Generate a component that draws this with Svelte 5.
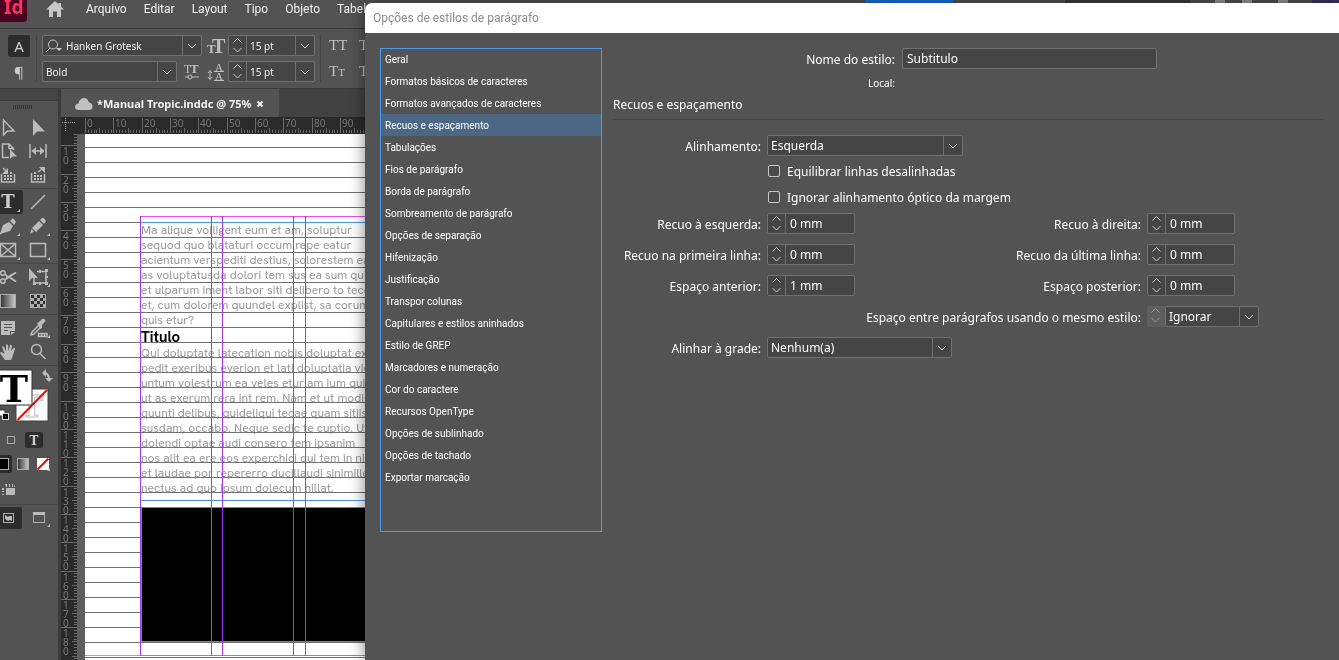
<script lang="ts">
	type Tool = {
		label: string;
		fill?: string;
		line?: string;
		glyph?: string;
		flyout?: boolean;
		active?: boolean;
	};

	const menus = ['Arquivo', 'Editar', 'Layout', 'Tipo', 'Objeto', 'Tabela'];

	const sections = [
		'Geral',
		'Formatos básicos de caracteres',
		'Formatos avançados de caracteres',
		'Recuos e espaçamento',
		'Tabulações',
		'Fios de parágrafo',
		'Borda de parágrafo',
		'Sombreamento de parágrafo',
		'Opções de separação',
		'Hifenização',
		'Justificação',
		'Transpor colunas',
		'Capitulares e estilos aninhados',
		'Estilo de GREP',
		'Marcadores e numeração',
		'Cor do caractere',
		'Recursos OpenType',
		'Opções de sublinhado',
		'Opções de tachado',
		'Exportar marcação'
	];

	// icon paths are drawn around a 0,0 centre
	const toolGroups: Tool[][] = [
		[
			{ label: 'Seleção', line: 'M-4.500 -7V8L-.5 4H6Z' },
			{ label: 'Seleção direta', fill: 'M-5 -8V9L-1 4.500H7Z' },
			{
				label: 'Página',
				line: 'M1 6.500H-5.500V-7H1L5.500 -2.500V-1M1 -7V-2.500H5.500',
				fill: 'M2 -2V8L4.500 5.500H9Z'
			},
			{
				label: 'Espaço',
				line: 'M-8 -7V7M8 -7V7M-6 0H6',
				fill: 'M-6.500 0L-2 -4V4ZM6.500 0L2 -4V4Z'
			},
			{
				label: 'Coletor de conteúdo',
				line: 'M-6.500 -1V7H6.500V-1M-5 -7L-1 -3',
				fill: 'M0 -7V-1H-6ZM-4 0h2v2h-2zM-1 0h2v2h-2zM2 0h2v2h-2zM-4 3h2v2h-2zM-1 3h2v2h-2zM2 3h2v2h-2zM2 -3h2v2h-2z'
			},
			{
				label: 'Inseridor de conteúdo',
				line: 'M-6.500 -2V7H6.500V-1M0 -3L4 -6',
				fill: 'M1 -8H7V-2ZM-4 0h2v2h-2zM-1 0h2v2h-2zM2 0h2v2h-2zM-4 3h2v2h-2zM-1 3h2v2h-2zM2 3h2v2h-2zM-4 -3h2v2h-2z'
			}
		],
		[
			{ label: 'Texto', glyph: 'T', flyout: true, active: true },
			{ label: 'Linha', line: 'M-7 7L7 -7' },
			{
				label: 'Caneta',
				fill: 'M-8 8L-5 -1L1 -4L5 0L2 5ZM2 -5L5 -8L8 -4L6 -1Z',
				line: 'M-8 8L-2 2',
				flyout: true
			},
			{
				label: 'Lápis',
				fill: 'M-8 8L-6.500 3L-4 5.500ZM-6 2L1 -5L5 -1L-2 6ZM2 -6L4 -8Q5 -8.500 6 -7.500L7.500 -6Q8 -5 7.500 -4L6 -2Z',
				flyout: true
			},
			{
				label: 'Quadro de retângulo',
				line: 'M-7.500 -6.500H7.500V6.500H-7.500ZM-7.500 -6.500L7.500 6.500M7.500 -6.500L-7.500 6.500',
				flyout: true
			},
			{ label: 'Retângulo', line: 'M-7.500 -6.500H7.500V6.500H-7.500Z', flyout: true }
		],
		[
			{
				label: 'Tesoura',
				line: 'M-2.800 -4A2.300 2.300 0 1 1 -7.400 -4A2.300 2.300 0 1 1 -2.800 -4M-2.800 4A2.300 2.300 0 1 1 -7.400 4A2.300 2.300 0 1 1 -2.800 4M-3 -3L0 0L-3 3',
				fill: 'M-2 -2L0 -1L7 -5Q9 -5 8 -3.500L1 1L-2 3ZM1 1L7 5Q9 5 8 3.500L3 0Z'
			},
			{
				label: 'Transformação livre',
				line: 'M-1 -5.500H8M-4 1V6H8V-6',
				fill: 'M-9 -9V4L-6 1H0ZM7 -8h3v3h-3zM7 5h3v3h-3zM-5 5h3v3h-3zM1 5h2v3h-2zM7 -1h3v2h-3zM1 -7h2v3h-2z',
				flyout: true
			},
			{ label: 'Amostra de gradiente' },
			{ label: 'Difusão de gradiente' }
		],
		[
			{
				label: 'Nota',
				fill: 'M-7 -7H7V3H2V7H-7ZM3 7V4H7ZM-4 -4V-3H4V-4ZM-4 -1V0H4V-1ZM-4 2V3H0V2Z'
			},
			{
				label: 'Conta-gotas',
				line: 'M1 -3L-5 3Q-7 5 -7 7Q-5 7 -3 5L3 -1M0 5.500H9M0 8.500H9M.5 5V9M3.500 5V9M6.500 5V9M9 5V9',
				fill: 'M-1 -5L1 -6L4 -9Q7 -10 7.500 -7L4 -3L4 0L2 1Z',
				flyout: true
			},
			{
				label: 'Mão',
				fill: 'M-3 8L-8 1Q-7 -1 -5 1L-3.500 2L-6 -5Q-5 -6.500 -4 -5L-2 -1L-2 -7Q-1 -8.500 0 -7L.5 -1L2 -7Q3.500 -8 4 -6L3 -1L5.500 -4Q7 -5 7 -3L4 6L3 8Z'
			},
			{ label: 'Zoom', line: 'M3.500 -2.500A5 5 0 1 1 -6.500 -2.500A5 5 0 1 1 3.500 -2.500M2 1.500L7.500 7' }
		]
	];

	const firstStory = [
		'Ma alique volligent eum et am, soluptur',
		'sequod quo blataturi occum repe eatur',
		'acientum verspediti destius, solorestem ea',
		'as voluptatusda dolori tem sus ea sum quis',
		'et ulparum iment labor siti delibero to tece',
		'et, cum dolorem quundel explist, sa corum',
		'quis etur?'
	];
	const secondStory = [
		'Qui doluptate latecation nobis doluptat ex',
		'pedit exeribus everion et lati doluptatia vid',
		'untum volestrum ea veles etur am ium quis',
		'ut as exerum rera int rem. Nam et ut modis',
		'quunti delibus, quideliqui tecae quam sitiis',
		'susdam, occabo. Neque sedic te cuptio. Ut',
		'dolendi optae audi consero tem ipsanim',
		'nos alit ea ere eos experchici qui tem in nis',
		'et laudae por repererro ducillaudi sinimille',
		'nectus ad quo ipsum dolecum hillat.'
	];

	// ten millimetres of the page at 75 %
	const STEP = 28.35;
	const majors = Array.from({ length: 19 }, (_, i) => i);
	const minors = Array.from({ length: 200 }, (_, i) => i);
	const tick = (i: number) => Math.round((i * STEP) / 10);

	let selected = $state('Recuos e espaçamento');
	let styleName = $state('Subtitulo');
	let balance = $state(false);
	let ignoreMargin = $state(false);
</script>

{#snippet chevron()}
	<svg class="chevron" viewBox="0 0 18 19" aria-hidden="true"><path d="M5 8l4 4 4-4" /></svg>
{/snippet}

{#snippet arrows(name: string, disabled = false)}
	<span class="arrows" class:disabled>
		<button aria-label="Aumentar {name}" {disabled}>
			<svg viewBox="0 0 17 9"><path d="M4.500 6.500l4-4 4 4" /></svg>
		</button>
		<button aria-label="Diminuir {name}" {disabled}>
			<svg viewBox="0 0 17 9"><path d="M4.500 3l4 4 4-4" /></svg>
		</button>
	</span>
{/snippet}

{#snippet spinField(id: string, label: string, value: string)}
	<label for={id}>{label}</label>
	<span class="box spin">
		{@render arrows(label)}
		<input {id} {value} />
	</span>
{/snippet}

{#snippet pointField(label: string)}
	<span class="box points">
		{@render arrows(label)}
		<span class="combo">
			<select aria-label={label}><option>15 pt</option></select>
			{@render chevron()}
		</span>
	</span>
{/snippet}

<div class="app">
	<header class="menubar">
		<svg class="logo" viewBox="0 0 27 22" aria-label="InDesign">
			<rect y="-8" x="-4" width="31" height="30" rx="4" />
			<text x="4" y="14">Id</text>
		</svg>
		<button class="home" aria-label="Início">
			<svg viewBox="0 0 18 16"><path d="M9 0L0 8.500H3V16H7V10.500H11V16H15V8.500H18L15 5.500V2H12.500V3.300Z" /></svg>
		</button>
		<nav>
			{#each menus as menu}
				<button>{menu}</button>
			{/each}
		</nav>
		<div class="window-tools">
			<button class="share" aria-label="Compartilhar"></button>
			<input class="search" aria-label="Pesquisar" />
			<button class="minimize" aria-label="Minimizar"></button>
			<button class="restore" aria-label="Restaurar"></button>
			<button class="close" aria-label="Fechar"></button>
			<span class="edge"></span>
		</div>
	</header>

	<section class="control">
		<div class="modes">
			<button class="active" aria-label="Caractere">A</button>
			<button aria-label="Parágrafo">¶</button>
		</div>
		<div class="type">
			<div class="row">
				<span class="box combo family">
					<svg class="lens" viewBox="0 0 18 14" aria-hidden="true">
						<circle cx="8" cy="5.500" r="4.500" />
						<path d="M5 9L1 13" />
						<path class="solid" d="M11 9h6l-3 3z" />
					</svg>
					<select aria-label="Fonte"><option>Hanken Grotesk</option></select>
					{@render chevron()}
				</span>
				<div class="size">
					<svg class="glyphs" viewBox="0 0 18 16" aria-hidden="true">
						<text x="0" y="15" font-size="13" font-weight="bold">T</text>
						<text x="5" y="15" font-size="20" font-weight="bold">T</text>
					</svg>
					{@render pointField('Tamanho da fonte')}
				</div>
			</div>
			<div class="row">
				<span class="box combo weight">
					<select aria-label="Estilo da fonte"><option>Bold</option></select>
					{@render chevron()}
				</span>
				<svg class="mixed" viewBox="0 0 16 16" aria-hidden="true">
					<text x="0" y="9" font-size="12">T</text>
					<text x="6" y="9" font-size="13" font-weight="bold">T</text>
					<path d="M1 13h3M8 13h7" /><circle cx="6" cy="13" r="2" />
				</svg>
				<div class="size">
					<svg class="glyphs leading" viewBox="0 0 18 18" aria-hidden="true">
						<text x="8" y="8" font-size="11">A</text>
						<text x="8" y="17" font-size="11">A</text>
						<path d="M7 8.500H17M7 17.500H17M3 8V16M1 10l2-2.500 2 2.500M1 14l2 2.500 2-2.500" />
					</svg>
					{@render pointField('Entrelinha')}
				</div>
			</div>
		</div>
		<div class="caps">
			<button>TT</button><button>T¹</button>
			<button class="small-caps">Tt</button><button>T₁</button>
		</div>
	</section>

	<div class="workspace">
		<aside class="tools">
			<div class="panel-top"></div>
			<div class="grip"></div>
			{#each toolGroups as group}
				<div class="tool-group">
					{#each group as tool}
						<button class="tool" class:active={tool.active} aria-label={tool.label}>
							<svg viewBox="-15 -12 30 24">
								{#if tool.label === 'Amostra de gradiente'}
									<defs>
										<linearGradient id="ramp">
											<stop offset="0" stop-color="#333" />
											<stop offset="1" stop-color="#ccc" />
										</linearGradient>
									</defs>
									<rect x="-7.500" y="-6.500" width="15" height="13" fill="url(#ramp)" class="frame" />
								{:else if tool.label === 'Difusão de gradiente'}
									{#each minors.slice(0, 20) as n}
										<rect
											x={-7 + (n % 5) * 3}
											y={-6 + Math.floor(n / 5) * 3}
											width="3"
											height="3"
											fill={n % 2 ? '#aaa' : '#333'}
										/>
									{/each}
									<rect x="-7.500" y="-6.500" width="15" height="13" class="frame" />
								{/if}
								{#if tool.glyph}<text x="0" y="6">{tool.glyph}</text>{/if}
								{#if tool.fill}<path class="fill" fill-rule="evenodd" d={tool.fill} />{/if}
								{#if tool.line}<path class="line" d={tool.line} />{/if}
								{#if tool.flyout}<path class="fill" d="M12 7v3h-3z" />{/if}
							</svg>
						</button>
					{/each}
				</div>
			{/each}

			<svg class="swatches" viewBox="0 0 58 62" role="img" aria-label="Preenchimento e traçado">
				<rect x="16" y="23" width="32" height="32" fill="#fff" stroke="#444" />
				<text x="32" y="51" class="ghost">T</text>
				<path d="M17.500 54L47 24" stroke="#f00" stroke-width="2" />
				<rect x="-2" y="4" width="34" height="35" fill="#fff" stroke="#333" />
				<text x="14" y="36" class="big">T</text>
				<path d="M44 7Q49 7 49 14" fill="none" stroke="#bbb" stroke-width="2" />
				<path d="M46 3v8l-4-4zM45 12h8l-4 4z" fill="#bbb" />
				<rect x="-1" y="44" width="6" height="6" fill="#fff" stroke="#333" />
				<rect x="2.500" y="47.500" width="6" height="6" fill="none" stroke="#ddd" />
				<rect x="4" y="49" width="3" height="3" fill="none" stroke="#000" stroke-width="2" />
			</svg>
			<div class="small-row">
				<button aria-label="Formatação afeta o contêiner">
					<svg viewBox="0 0 22 24"><rect x="7.500" y="8.500" width="7" height="7" class="frame" /></svg>
				</button>
				<button aria-label="Formatação afeta o texto">
					<svg viewBox="0 0 36 24">
						<rect x="3" y="4" width="18" height="16" rx="2" fill="#2d2d2d" />
						<text x="12" y="16.500" class="mini">T</text>
					</svg>
				</button>
			</div>
			<div class="small-row">
				<button aria-label="Aplicar cor">
					<svg viewBox="0 0 14 24">
						<rect x="-4" y="3" width="16" height="18" rx="2" fill="#2d2d2d" />
						<rect x="-3.500" y="6.500" width="12" height="11" fill="#000" stroke="#aaa" />
					</svg>
				</button>
				<button aria-label="Aplicar gradiente">
					<svg viewBox="0 0 20 24"><rect x="3.500" y="6.500" width="11" height="11" fill="url(#ramp)" class="frame" /></svg>
				</button>
				<button aria-label="Aplicar nenhum">
					<svg viewBox="0 0 20 24">
						<rect x="3" y="6" width="12" height="12" fill="#fff" />
						<path d="M3.500 17.500L14.500 6.500" stroke="#f00" stroke-width="2" />
						<path class="fill" d="M16 16v3h-3z" />
					</svg>
				</button>
			</div>
			<div class="small-row extra">
				<button aria-label="Exibir opções">
					<svg viewBox="0 2 22 24">
						<path class="fill" d="M6 12h9v7H6zM2 12h2v2H2zM2 15h2v1H2zM2 18h2v1H2zM5 8l1 3h1V8zM9 8v3h1V8zM12 8v3h1V8zM15 8l-1 3h1z" />
					</svg>
				</button>
			</div>
			<div class="small-row last">
				<button aria-label="Modo de exibição">
					<svg viewBox="0 0 23 24">
						<rect x="-4" y="1" width="26" height="22" rx="2" fill="#2d2d2d" />
						<rect x="3.500" y="7.500" width="10" height="9" class="frame" />
						<path class="fill" d="M5 9l3 2 1-1h3v5l-2-1-2 1-3-2z" />
					</svg>
				</button>
				<button aria-label="Modo de tela">
					<svg viewBox="0 0 30 24">
						<rect x="10.500" y="6.500" width="11" height="10" class="frame" />
						<path class="fill" d="M10 6h12v3H10zM27 18v3h-3z" />
					</svg>
				</button>
			</div>
		</aside>

		<main class="document">
			<div class="tabs">
				<div class="tab">
					<svg viewBox="0 0 18 12" aria-hidden="true">
						<path d="M4 12Q0 12 0 9Q0 6 3.500 5.500Q4 1 8.500 0Q13 0 13.500 4Q17.500 5 17.500 8.500Q17.500 12 14 12Z" />
					</svg>
					<span>*Manual Tropic.inddc @ 75%</span>
					<button aria-label="Fechar documento">
						<svg viewBox="0 0 8 8"><path d="M1.500 1.500l5 5M6.500 1.500l-5 5" /></svg>
					</button>
				</div>
			</div>
			<div class="rulers">
				<svg class="ruler corner" aria-hidden="true">
					<path class="dots" d="M1 5.500H15M4.500 1V15" />
				</svg>
				<svg class="ruler across" aria-hidden="true">
					{#each minors as n}
						<path d="M{8 + tick(n)} 16v{n % 5 ? -3 : -5}" />
					{/each}
					{#each majors.slice(0, 10) as n}
						<path d="M{8 + tick(n * 10)} 1v15" />
						<text x={10 + tick(n * 10)} y="10">{n * 10}</text>
					{/each}
				</svg>
				<svg class="ruler down" aria-hidden="true">
					{#each minors as n}
						<path d="M16 {tick(n) - 17}h{n % 5 ? -3 : -5}" />
					{/each}
					{#each majors.slice(1) as n}
						<path d="M0 {tick(n * 10) - 17}h16" />
						{#each String(n * 10) as digit, d}
							<text x="2" y={tick(n * 10) - 7 + d * 9}>{digit}</text>
						{/each}
					{/each}
				</svg>
				<div class="pasteboard">
					<div class="page">
						<div class="story">
							{#each firstStory as line}<p>{line}</p>{/each}
							<h1>Titulo</h1>
							{#each secondStory as line}<p>{line}</p>{/each}
						</div>
						<div class="picture"></div>
						<svg class="guides" aria-hidden="true">
							<path class="frame-edge" d="M56 88.500H900M56 366.500H900M900 373.500H56.500V507.500H900" />
							<path class="margin" d="M55 82.500H900M55 521.500H900" />
							<path class="bleed" d="M0 521.500H55" />
							<path class="column" d="M55.500 82V522M126.500 82V522M137.500 82V522M208.500 82V522M220.500 82V522" />
						</svg>
					</div>
				</div>
			</div>
		</main>
	</div>

	<div class="dialog" role="dialog" aria-labelledby="dialog-title">
		<h2 id="dialog-title">Opções de estilos de parágrafo</h2>
		<div class="dialog-body">
			<ul class="sections">
				{#each sections as section}
					<li>
						<button class:selected={section === selected} onclick={() => (selected = section)}>
							{section}
						</button>
					</li>
				{/each}
			</ul>

			<form class="options" onsubmit={(e) => e.preventDefault()}>
				<div class="naming">
					<label for="style-name">Nome do estilo:</label>
					<input id="style-name" class="box" bind:value={styleName} />
					<span class="local">Local:</span>
				</div>
				<h3>{selected}</h3>

				<div class="fields">
					<label for="align">Alinhamento:</label>
					<span class="box combo align">
						<select id="align"><option>Esquerda</option></select>
						{@render chevron()}
					</span>
				</div>
				<div class="checks">
					<label><input type="checkbox" bind:checked={balance} />Equilibrar linhas desalinhadas</label>
					<label>
						<input type="checkbox" bind:checked={ignoreMargin} />Ignorar alinhamento óptico da margem
					</label>
				</div>

				<div class="fields">
					{@render spinField('left', 'Recuo à esquerda:', '0 mm')}
					{@render spinField('right', 'Recuo à direita:', '0 mm')}
					{@render spinField('first', 'Recuo na primeira linha:', '0 mm')}
					{@render spinField('last', 'Recuo da última linha:', '0 mm')}
					{@render spinField('before', 'Espaço anterior:', '1 mm')}
					{@render spinField('after', 'Espaço posterior:', '0 mm')}
					<label class="long" for="same-style">Espaço entre parágrafos usando o mesmo estilo:</label>
					<span class="same-style">
						{@render arrows('espaço', true)}
						<span class="box combo">
							<select id="same-style"><option>Ignorar</option></select>
							{@render chevron()}
						</span>
					</span>
					<label for="grid">Alinhar à grade:</label>
					<span class="box combo grid">
						<select id="grid"><option>Nenhum(a)</option></select>
						{@render chevron()}
					</span>
				</div>
			</form>
		</div>
	</div>
</div>

<style>
	:global(body) {
		margin: 0;
		background: #535353;
	}
	.app {
		position: relative;
		display: flex;
		flex-direction: column;
		height: 100vh;
		overflow: hidden;
		background: #535353;
		color: #f0f0f0;
		font-family: 'Noto Sans', sans-serif;
		font-size: 12px;
	}
	button,
	input,
	select {
		margin: 0;
		padding: 0;
		border: none;
		border-radius: 0;
		background: none;
		color: inherit;
		font: inherit;
		outline: none;
	}
	select,
	input[type='checkbox'] {
		appearance: none;
	}
	button {
		cursor: pointer;
	}
	svg {
		display: block;
		flex: none;
	}

	/* menu bar */
	.menubar {
		display: flex;
		flex: none;
		height: 28px;
		border-bottom: 1px solid #3c3c3c;
	}
	.logo {
		width: 27px;
		height: 22px;

		& rect {
			fill: #49021f;
		}
		& text {
			fill: #ff3366;
			font-size: 19px;
			font-weight: bold;
		}
	}
	.home {
		align-self: flex-start;
		margin: 1px 22px 0 19px;

		& svg {
			width: 18px;
			height: 16px;
			fill: #c8c8c8;
		}
	}
	nav {
		display: flex;
		align-items: flex-start;
		gap: 17px;

		& button {
			font-family: Roboto, sans-serif;
			line-height: 18px;
		}
	}
	.window-tools {
		display: flex;
		margin-left: auto;
	}
	.share {
		width: 88px;
		margin-right: 112px;
		background: #1b6fe0;
	}
	.search {
		width: 125px;
		margin-right: 25px;
		background: #3e3e3e;
	}
	.minimize,
	.restore,
	.close {
		width: 10px;
		background: #999;
	}
	.minimize {
		margin-right: 17px;
	}
	.restore {
		margin-right: 26px;
	}
	.close {
		margin-right: 24px;
	}
	.edge {
		width: 27px;
		background: #3a3560;
	}

	/* fields */
	.box {
		box-sizing: border-box;
		height: 21px;
		border: 1px solid #707070;
		border-radius: 2px;
		background: #454545;
	}
	.combo {
		display: grid;
		grid-template-rows: 100%;

		& select {
			grid-area: 1 / 1;
			width: 100%;
			padding: 0 20px 0 3px;
		}
	}
	.chevron {
		grid-area: 1 / 1;
		justify-self: end;
		width: 18px;
		height: 19px;
		border-left: 1px solid #707070;
		pointer-events: none;
	}
	.chevron path,
	.arrows path {
		fill: none;
		stroke: #d0d0d0;
	}
	.arrows {
		display: flex;
		flex: none;
		flex-direction: column;
		width: 17px;
		border-right: 1px solid #707070;

		& svg {
			width: 17px;
			height: 9px;
		}
		&.disabled {
			width: 18px;
			height: 21px;
			border: none;
			border-radius: 2px 0 0 2px;
			background: #5e5e5e;
		}
		&.disabled path {
			stroke: #999;
		}
	}

	/* control panel */
	.control {
		display: flex;
		flex: none;
		box-sizing: border-box;
		height: 60px;
		padding: 6px 0 0 8px;
		border-bottom: 1px solid #3c3c3c;
		font-size: 10px;
	}
	.modes {
		display: flex;
		flex-direction: column;
		gap: 4px;
		height: 47px;
		padding-right: 6px;
		border-right: 1px solid #464646;

		& button {
			width: 22px;
			height: 22px;
			border-radius: 2px;
			color: #ccc;
			font-size: 15px;
			line-height: 22px;
		}
		& .active {
			background: #2d2d2d;
		}
	}
	.type {
		display: flex;
		flex-direction: column;
		gap: 5px;
		width: 273px;
		margin: 0 5px;
	}
	.row {
		display: flex;
		align-items: center;
		justify-content: space-between;
	}
	.family {
		width: 160px;

		& select {
			padding-left: 23px;
		}
	}
	.lens {
		grid-area: 1 / 1;
		align-self: center;
		width: 18px;
		height: 14px;
		margin-left: 2px;
		fill: none;
		stroke: #c8c8c8;
		pointer-events: none;

		& .solid {
			fill: #c8c8c8;
			stroke: none;
		}
	}
	.weight {
		width: 135px;
	}
	.size {
		display: flex;
		align-items: center;
		gap: 3px;
	}
	.glyphs,
	.mixed {
		width: 18px;
		height: 16px;
		overflow: visible;
		fill: #c0c0c0;
		font-family: 'Liberation Serif', serif;

		& path,
		& circle {
			fill: none;
			stroke: #c0c0c0;
		}
	}
	.leading {
		height: 18px;
	}
	.mixed {
		width: 16px;
	}
	.points {
		display: flex;
		width: 87px;

		& .combo {
			flex: 1;
		}
	}
	.caps {
		display: grid;
		grid-template-columns: 30px 30px;
		grid-template-rows: 21px 21px;
		gap: 5px 0;
		height: 47px;
		padding-left: 8px;
		border-left: 1px solid #464646;

		& button {
			color: #c0c0c0;
			font-family: 'Liberation Serif', serif;
			font-size: 15px;
			text-align: left;
		}
		& .small-caps {
			font-variant: small-caps;
		}
	}

	/* tools panel */
	.workspace {
		display: flex;
		flex: 1;
		min-height: 0;
	}
	.tools {
		flex: none;
		width: 58px;
		border-right: 3px solid #3c3c3c;
		overflow: hidden;
	}
	.panel-top {
		height: 11px;
		border-bottom: 1px solid #3c3c3c;
		background: #454545;
	}
	.grip {
		width: 20px;
		height: 4px;
		margin: 4px 0 5px 13px;
		background: repeating-linear-gradient(90deg, #333 0 1px, #535353 1px 2px);
	}
	.tool-group {
		display: grid;
		grid-template-columns: 30px 30px;
		grid-auto-rows: 24px;
		margin-left: -7px;
		padding: 1px 0;
		border-bottom: 1px solid #454545;
	}
	.tool svg {
		width: 30px;
		height: 24px;
	}
	.tool.active {
		border-radius: 3px;
		background: #2d2d2d;
	}
	.tool text,
	.mini {
		fill: #ccc;
		font-family: 'DejaVu Serif', serif;
		font-weight: bold;
		text-anchor: middle;
	}
	.tool text {
		font-size: 18px;
	}
	.mini {
		font-size: 12px;
	}
	.fill {
		fill: #bbb;
	}
	.line {
		fill: none;
		stroke: #bbb;
		stroke-width: 1.5;
	}
	.frame {
		stroke: #aaa;
	}
	.frame:not([fill]) {
		fill: none;
	}
	.swatches {
		width: 58px;
		height: 62px;

		& text {
			font-family: 'DejaVu Serif', serif;
			font-weight: bold;
			text-anchor: middle;
		}
		& .big {
			font-size: 38px;
		}
		& .ghost {
			fill: none;
			stroke: #bbb;
			font-size: 30px;
		}
	}
	.small-row {
		display: flex;

		& svg {
			height: 24px;
		}
	}
	.small-row.extra {
		margin-top: 2px;
	}
	.small-row.last {
		margin-top: 2px;
		padding-top: 1px;
		border-top: 1px solid #454545;
	}

	/* document window */
	.document {
		display: flex;
		flex: 1;
		flex-direction: column;
		min-width: 0;
	}
	.tabs {
		display: flex;
		height: 28px;
		background: #424242;
	}
	.tab {
		display: flex;
		align-items: center;
		box-sizing: border-box;
		width: 218px;
		padding: 1px 14px 0;
		background: #535353;
		font-size: 11px;
		font-weight: bold;

		& > svg {
			width: 18px;
			height: 12px;
			fill: #c0c0c0;
		}
		& span {
			margin: 0 5px 0 4px;
			white-space: nowrap;
		}
		& button svg {
			width: 8px;
			height: 8px;
			stroke: #eee;
			stroke-width: 2;
		}
	}
	.rulers {
		display: grid;
		flex: 1;
		grid-template-columns: 16px 1fr;
		grid-template-rows: 17px 1fr;
		min-height: 0;
	}
	.ruler {
		width: 100%;
		height: 100%;
		background: #2a2a2a;
		shape-rendering: crispEdges;

		& path {
			stroke: #6a6a6a;
		}
		& .dots {
			stroke: #999;
			stroke-dasharray: 1 1;
		}
		& text {
			fill: #777;
			font-size: 10px;
		}
	}
	.pasteboard {
		padding-left: 8px;
		background: #5e5e5e;
		overflow: hidden;
	}
	.page {
		position: relative;
		height: 100%;
		background: repeating-linear-gradient(#fff 0 13px, #707070 13px 14px, #fff 14px 15px);
	}
	.story {
		padding: 89px 0 0 56px;
		color: #9a9a9a;
		font-family: 'Hanken Grotesk', 'Inter', sans-serif;
		font-size: 12px;
		/* keeps the baseline grid visible through the letters */
		mix-blend-mode: darken;

		& p,
		& h1 {
			margin: 0;
			line-height: 15px;
			white-space: nowrap;
		}
		& h1 {
			color: #000;
			font-size: 15px;
			line-height: 18px;
		}
	}
	.picture {
		height: 134px;
		margin: 11px 0 0 57px;
		background: #000;
	}
	.guides {
		position: absolute;
		inset: 0;
		width: 100%;
		height: 100%;
		fill: none;
	}
	.frame-edge {
		stroke: #4a90e8;
	}
	.margin {
		stroke: #f04fe0;
	}
	.bleed {
		stroke: #00f0f0;
	}
	.column {
		stroke: #9b3cf5;
	}

	/* dialog */
	.dialog {
		position: absolute;
		inset: 3px 0 0 365px;
		border-top-left-radius: 7px;
		background: #535353;
		box-shadow: 0 0 16px rgb(0 0 0 / 50%);
		color: #fff;
	}
	.dialog h2 {
		margin: 0;
		padding-left: 8px;
		border-top-left-radius: 7px;
		background: #fff;
		color: #8c8c8c;
		font-family: Roboto, sans-serif;
		font-size: 12px;
		font-weight: normal;
		line-height: 30px;
	}
	.dialog-body {
		display: flex;
		gap: 11px;
		padding: 15px 15px 0;
	}
	.sections {
		flex: none;
		width: 222px;
		margin: 0;
		padding: 0 0 44px;
		outline: 1px solid #4a9df0;
		outline-offset: -1px;
		list-style: none;

		& button {
			display: block;
			width: 100%;
			height: 22px;
			padding-left: 5px;
			font-family: Roboto, sans-serif;
			font-size: 10px;
			text-align: left;
		}
		& .selected {
			background: #4c6783;
		}
	}
	.options {
		flex: 1;
	}
	.naming {
		display: grid;
		grid-template-columns: 282px 255px;
		column-gap: 7px;
		align-items: center;
		text-align: right;

		& label {
			padding-top: 1px;
		}
		& .box {
			padding: 0 4px;
		}
		& .local {
			padding: 6px 0;
			font-size: 10px;
			line-height: 16px;
		}
	}
	h3 {
		margin: 0 0 15px;
		padding-bottom: 6px;
		border-bottom: 1px solid #474747;
		font-size: 12px;
		font-weight: normal;
		line-height: 16px;
	}
	.fields {
		display: grid;
		grid-template-columns: 148px 88px 280px 112px;
		grid-auto-rows: 21px;
		gap: 10px 6px;

		& label {
			line-height: 24px;
			text-align: right;
			white-space: nowrap;
		}
		& .long {
			grid-column: 1 / 4;
		}
	}
	.align,
	.grid {
		grid-column: 2 / 4;
		width: 196px;
	}
	.grid {
		width: 185px;
	}
	.spin {
		display: flex;
		width: 88px;

		& input {
			flex: 1;
			min-width: 0;
			padding-left: 4px;
		}
	}
	.same-style {
		display: flex;

		& .combo {
			flex: 1;
		}
	}
	.checks {
		padding: 2px 0 3px 154px;

		& label {
			display: flex;
			align-items: center;
			gap: 7px;
			height: 26px;
		}
		& input {
			box-sizing: border-box;
			width: 12px;
			height: 12px;
			margin-left: 1px;
			border: 1px solid #c8c8c8;
			border-radius: 2px;
			background: #4a4a4a;
		}
		& input:checked {
			background: #c8c8c8;
		}
	}
</style>
